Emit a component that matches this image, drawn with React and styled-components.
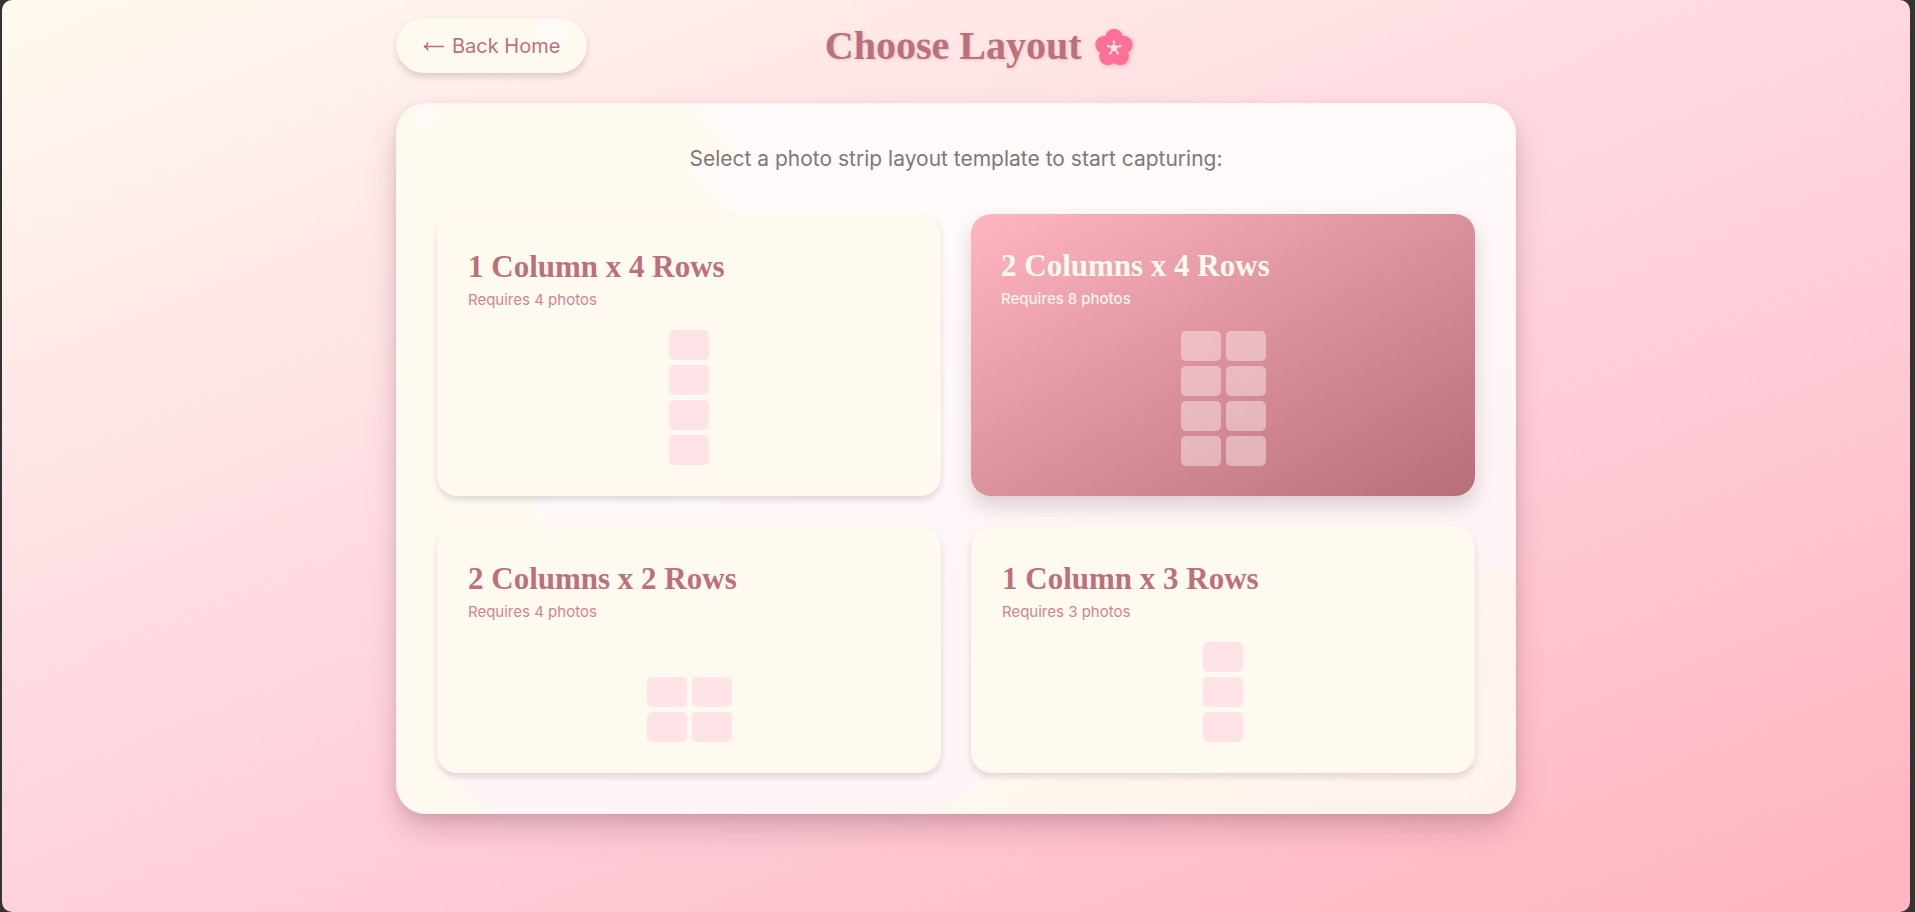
import React, { useState } from 'react';
import styled, { createGlobalStyle, css } from 'styled-components';

const GlobalStyle = createGlobalStyle`
  * {
    box-sizing: border-box;
  }

  body {
    margin: 0;
    background-color: #333;
    font-family: Inter, 'Open Sans', sans-serif;
  }
`;

const Page = styled.div`
  min-height: 100vh;
  margin: 0 5px 0 2px;
  padding: 18px 20px 40px;
  border-radius: 10px;
  background: linear-gradient(158deg, #fffaf0 0%, #ffd1dc 55%, #ffb6c1 96%);
`;

const Container = styled.div`
  max-width: 1120px;
  margin: 0 auto;
`;

const Header = styled.header`
  display: flex;
  align-items: center;
  justify-content: space-between;
  margin-bottom: 30px;
`;

const BackButton = styled.button`
  display: flex;
  align-items: center;
  gap: 8px;
  height: 55px;
  padding: 0 26px;
  border: 1px solid #fff5f0;
  border-radius: 28px;
  background: radial-gradient(ellipse 14px 16px at 153px 11px, #fff9f8 98%, transparent) #fffaf0;
  box-shadow: 0 4px 6px rgba(0, 0, 0, 0.14);
  color: #bc707c;
  font-family: inherit;
  font-size: 20px;
  cursor: pointer;
`;

const Arrow = styled.svg`
  width: 21px;
  height: 12px;
  fill: none;
  stroke: currentColor;
`;

const Title = styled.h1`
  display: flex;
  align-items: center;
  gap: 12px;
  margin: 0;
  color: #bc707c;
  font-family: 'Liberation Serif', serif;
  font-size: 40px;
  line-height: 55px;
  text-shadow: 1px 1px 3px rgba(183, 110, 121, 0.3);
`;

const Flower = styled.svg`
  width: 40px;
  height: 40px;
  margin-top: 4px;
  filter: drop-shadow(1px 1px 2px rgba(120, 80, 80, 0.3));
`;

const HeaderSpace = styled.div`
  width: 145px;
`;

const PanelShadow = styled.div`
  border-radius: 30px;
  box-shadow:
    0 16px 30px -2px rgba(120, 60, 80, 0.28),
    0 4px 10px rgba(120, 60, 80, 0.1);
`;

const Panel = styled.main`
  position: relative;
  overflow: hidden;
  padding: 40px;
  border: 1px solid rgba(255, 245, 245, 0.8);
  border-radius: 30px;
  background:
    radial-gradient(ellipse 8px 12px at 29px 8px, #fff9f8 97%, transparent),
    linear-gradient(135deg, #fffaf0 60%, #fff2ec);

  &::before {
    content: '';
    position: absolute;
    inset: 0;
    background: linear-gradient(160deg, #fffafa 30%, #fff4f6 70%);
    clip-path: polygon(
      26.5% 0, 30.5% 7.5%, 26.3% 9.5%, 30.1% 15.6%, 30.1% 30%,
      11.8% 56.4%, 13.5% 59.2%, 13.5% 70%, 4.2% 94.2%, 7.9% 100%,
      48% 100%, 53% 95%, 97.7% 64.7%, 100% 67%, 100% 0
    );
  }
`;

const Intro = styled.p`
  position: relative;
  margin: 0 0 40px;
  color: #857578;
  font-size: 21px;
  line-height: 30px;
  text-align: center;
`;

const LayoutGrid = styled.div`
  position: relative;
  display: grid;
  grid-template-columns: repeat(2, 1fr);
  gap: 30px;
`;

const Card = styled.button`
  display: flex;
  flex-direction: column;
  align-items: stretch;
  justify-content: space-between;
  gap: 19px;
  padding: 30px;
  border: 1px solid #fff6ef;
  border-radius: 20px;
  background: #fffaf0;
  box-shadow: 0 4px 6px rgba(80, 50, 90, 0.16);
  color: #bc707c;
  font-family: inherit;
  text-align: left;
  cursor: pointer;

  ${({ $selected }) =>
    $selected &&
    css`
      border: none;
      background: linear-gradient(150deg, #ffb6c1, #b76e79);
      box-shadow: 0 10px 20px rgba(60, 50, 60, 0.19);
      color: #fffaf0;
    `}
`;

const CardTitle = styled.span`
  display: block;
  font-family: 'Liberation Serif', serif;
  font-size: 31px;
  font-weight: 700;
  line-height: 43px;
`;

const CardInfo = styled.span`
  display: block;
  color: ${({ $selected }) => ($selected ? '#fff3ee' : '#d08490')};
  font-size: 15px;
  font-weight: ${({ $selected }) => ($selected ? 500 : 400)};
  line-height: 23px;
`;

const Preview = styled.span`
  display: grid;
  grid-template-columns: repeat(${({ $cols }) => $cols}, 40px);
  grid-auto-rows: 30px;
  gap: 5px;
  justify-content: center;
`;

const Cell = styled.span`
  border-radius: 5px;
  background: ${({ $selected }) => ($selected ? 'rgba(255, 240, 245, 0.45)' : '#ffe3e6')};
`;

const layouts = [
  { id: '1x4', name: '1 Column x 4 Rows', cols: 1, rows: 4 },
  { id: '2x4', name: '2 Columns x 4 Rows', cols: 2, rows: 4 },
  { id: '2x2', name: '2 Columns x 2 Rows', cols: 2, rows: 2 },
  { id: '1x3', name: '1 Column x 3 Rows', cols: 1, rows: 3 },
];

const petalAngles = [0, 72, 144, 216, 288];

function Blossom() {
  return (
    <Flower viewBox="-19 -19 38 38" aria-hidden="true">
      {petalAngles.map((angle) => (
        <path
          key={angle}
          transform={`rotate(${angle})`}
          d="M0 2 L-8 -8 C-9 -12 -7 -16 -3 -17.5 C-1 -18.5 1 -18.5 3 -17.5 C7 -16 9 -12 8 -8Z"
          fill="#ff7096"
        />
      ))}
      <circle r="11" fill="#ff7096" />
      {petalAngles.map((angle) => (
        <g key={angle} transform={`rotate(${angle})`}>
          <path d="M0 0V-6" stroke="#ffe4e4" strokeWidth="1.5" />
          <circle cy="-6" r="1.2" fill="#ffe4e4" />
        </g>
      ))}
      <circle r="3" fill="#ffe4e4" />
    </Flower>
  );
}

function App() {
  const [selected, setSelected] = useState('2x4');

  return (
    <>
      <GlobalStyle />
      <Page>
        <Container>
          <Header>
            <BackButton type="button">
              <Arrow viewBox="0 0 21 12" aria-hidden="true">
                <path d="M1 6.5H21M5 2.5C4.5 4.5 3 6 1 6.5C3 7 4.5 8.5 5 10.5" strokeWidth="1.3" />
              </Arrow>
              Back Home
            </BackButton>
            <Title>
              Choose Layout
              <Blossom />
            </Title>
            <HeaderSpace />
          </Header>
          <PanelShadow>
            <Panel>
              <Intro>Select a photo strip layout template to start capturing:</Intro>
              <LayoutGrid>
                {layouts.map(({ id, name, cols, rows }) => (
                  <Card
                    key={id}
                    type="button"
                    $selected={selected === id}
                    aria-pressed={selected === id}
                    onClick={() => setSelected(id)}
                  >
                    <span>
                      <CardTitle>{name}</CardTitle>
                      <CardInfo $selected={selected === id}>Requires {cols * rows} photos</CardInfo>
                    </span>
                    <Preview $cols={cols}>
                      {Array.from({ length: cols * rows }, (_, i) => (
                        <Cell key={i} $selected={selected === id} />
                      ))}
                    </Preview>
                  </Card>
                ))}
              </LayoutGrid>
            </Panel>
          </PanelShadow>
        </Container>
      </Page>
    </>
  );
}

export default App;
